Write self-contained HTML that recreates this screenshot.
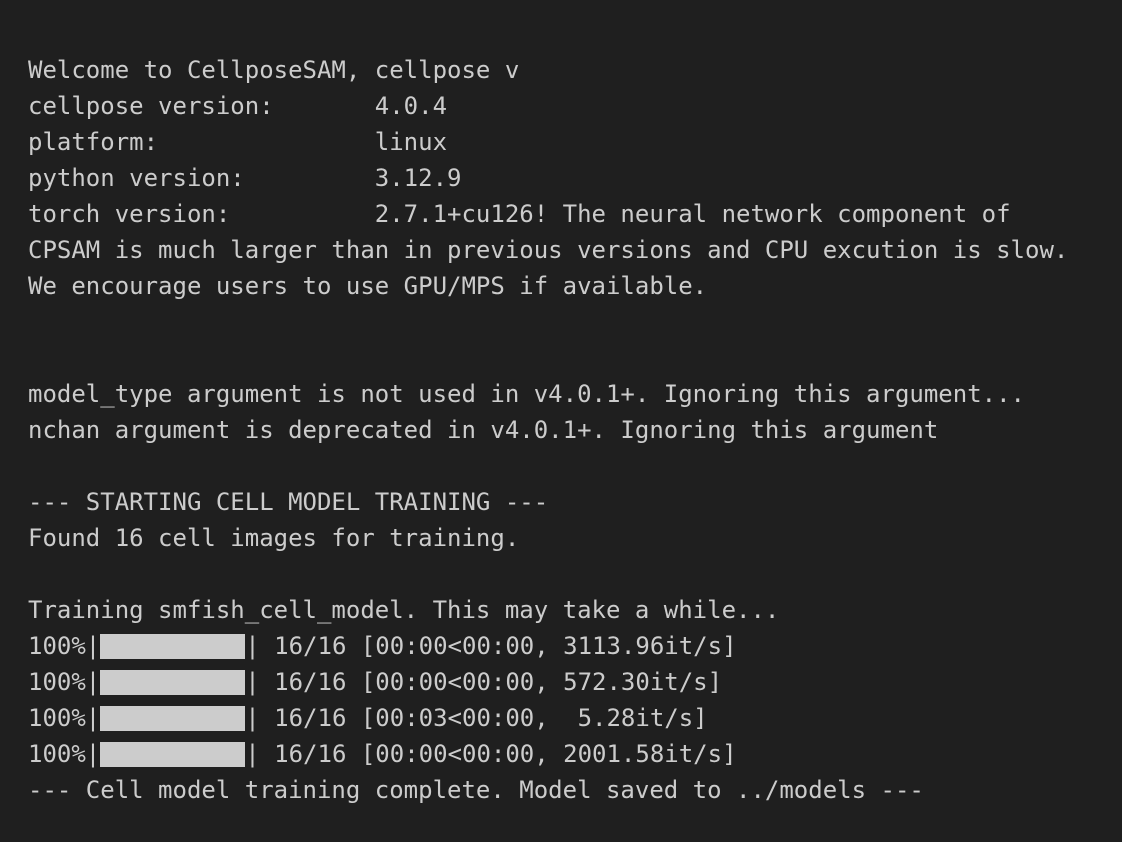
<!DOCTYPE html>
<html><head><meta charset="utf-8"><style>
html,body{margin:0;background:#1f1f1f;width:1122px;height:842px;overflow:hidden}
pre{margin:0;padding:52px 0 0 28px;font-family:"DejaVu Sans Mono","Liberation Mono",monospace;font-size:24px;line-height:36px;color:#cccccc}
.b{display:inline-block;width:145px;height:25px;background:#cccccc;vertical-align:-5px}
</style></head><body><pre>Welcome to CellposeSAM, cellpose v
cellpose version:       4.0.4
platform:               linux
python version:         3.12.9
torch version:          2.7.1+cu126! The neural network component of
CPSAM is much larger than in previous versions and CPU excution is slow.
We encourage users to use GPU/MPS if available.


model_type argument is not used in v4.0.1+. Ignoring this argument...
nchan argument is deprecated in v4.0.1+. Ignoring this argument

--- STARTING CELL MODEL TRAINING ---
Found 16 cell images for training.

Training smfish_cell_model. This may take a while...
100%|<span class="b"></span>| 16/16 [00:00&lt;00:00, 3113.96it/s]
100%|<span class="b"></span>| 16/16 [00:00&lt;00:00, 572.30it/s]
100%|<span class="b"></span>| 16/16 [00:03&lt;00:00,  5.28it/s]
100%|<span class="b"></span>| 16/16 [00:00&lt;00:00, 2001.58it/s]
--- Cell model training complete. Model saved to ../models ---</pre></body></html>
